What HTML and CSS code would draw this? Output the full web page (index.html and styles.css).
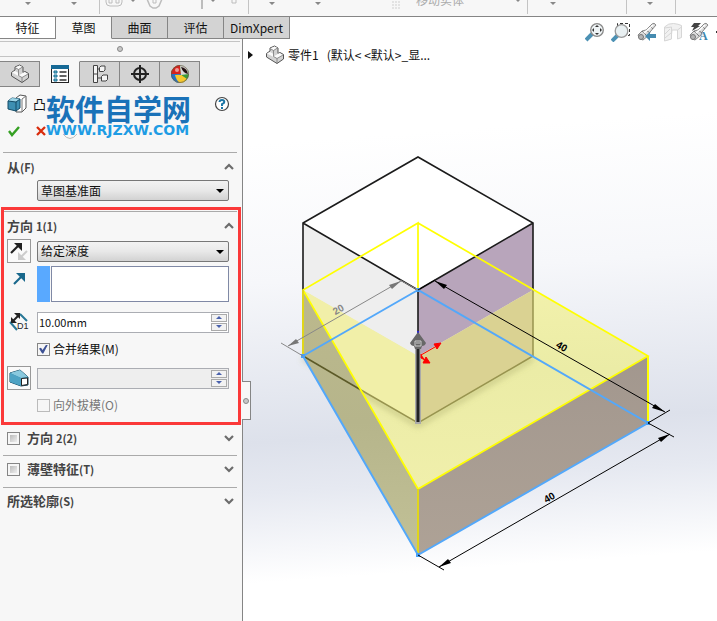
FILE: index.html
```html
<!DOCTYPE html>
<html lang="zh-CN">
<head>
<meta charset="utf-8">
<title>零件1</title>
<link rel="stylesheet" href="styles.css">
</head>
<body>
<svg class="defs" aria-hidden="true">
  <symbol id="part" viewBox="0 0 20 20">
    <path d="M1.500 8.500 5 6V3l4.500-2L13 3v5.500l2-1 3.500 2v4.500L12 18.500 1.500 12Z" fill="#d2d2d2" stroke="#555" stroke-linejoin="round"/>
    <path d="M5 3.500 9.500 1.500l3 1.500L8.500 5.500ZM2 8.500 5 7l3.500 2v3ZM8.500 11.500l6-3.500 3.500 2-6 3.500Z" fill="#fafafa"/>
    <path d="M8.500 5.500V11.500l3.500 2v5M8.500 5.500 5 3.500M8.500 5.500l4-2.500M12 13.500l6-3.500" stroke="#777" stroke-width=".8" fill="none"/>
  </symbol>
  <symbol id="up" viewBox="0 0 12 8"><path d="m2 6 4-4 4 4" fill="none" stroke="#6c6c6c" stroke-width="2.200"/></symbol>
  <symbol id="down" viewBox="0 0 12 8"><path d="m2 2 4 4 4-4" fill="none" stroke="#6c6c6c" stroke-width="2.200"/></symbol>
  <symbol id="tube" viewBox="0 0 20 20">
    <path d="m1 13 4-4 4-1 6-6q2-2 4 1l-6 7-1 3-6 5-3-1Z" fill="#dcdcdc" stroke="#888"/>
    <path d="m5 9 5 5m-1-6 4 3m0-7 3 3" fill="none" stroke="#777"/>
    <path d="m7 11 9-8" stroke="#fff" stroke-width="1.500"/>
    <circle cx="4" cy="15" r="2.500" fill="#b5b5b5" stroke="#777"/>
  </symbol>
</svg>

<div class="app">
  <header class="ribbon">
    <div class="group"><svg width="99" height="16"><path class="tri" d="M25 2h6l-3 3zM71 2h6l-3 3z"/></svg></div>
    <div class="group"><svg width="148" height="16">
      <g fill="none" stroke="#bdbdbd"><path d="M6-2v4q0 4 4 4h8q4 0 4-4v-4M9-1v4h3v-4M16-1v4h3v-4" /><path d="m47-1 3 7 3 2h3l3-2 3-7" stroke-width="1.500"/><path d="M53-1v4h3v-4"/><path d="M102 0v9" stroke-width="2"/><path d="M132-1v4h4v-4"/></g>
      <path class="tri" d="M30-1h6l-3 3zM110-1h6l-3 3z"/></svg></div>
    <div class="group"><svg width="278" height="16"><path class="tri" d="M20 2h6l-3 3zM66 2h6l-3 3zM266-1h6l-3 3z"/><path d="M143 2h8M143 5h8M143 8h8" stroke="#ddd" stroke-width="1.500" stroke-dasharray="2 1"/><text x="167" y="5" class="ribbon-label">移动实体</text></svg></div>
    <div class="group"><svg width="98" height="16"><path class="tri" d="M22 2h6l-3 3z"/></svg></div>
    <div class="group"><svg width="48" height="16"><path class="tri" d="M20 2h6l-3 3z"/></svg></div>
  </header>

  <nav class="tabs">
    <button class="tab light">特征</button><button class="tab active">草图</button><button class="tab">曲面</button><button class="tab">评估</button><button class="tab wide">DimXpert</button>
  </nav>

  <aside class="panel">
    <div class="grip"><i class="dot"></i></div>
    <nav class="manager">
      <button aria-label="设计树"><svg width="20" height="20"><use href="#part"/></svg></button>
      <button class="active" aria-label="属性"><svg width="20" height="20"><rect x="1.500" y="1.500" width="17" height="17" fill="#fff" stroke="#222"/><path d="M1 1h18v4H1z" fill="#176a96"/><path d="M4 7h3v2H4zM4 11h3v2H4zM4 15h3v2H4z" fill="#7cc" stroke="#176a96"/><path d="M9.500 8h7M9.500 12h7M9.500 16h7" stroke="#333" stroke-width="1.500"/></svg></button>
      <button aria-label="配置"><svg width="20" height="20" fill="#f4f4f4" stroke="#444"><path d="M3.500 1.500h4v17h-4zM3.500 10h4M7.500 5h3M7.500 14h4"/><path d="M9.500 3.500 11 2h4v4l-1.500 1.500h-4ZM11.500 12.500 13 11h4.500v4.500L16 17h-4.500Z"/></svg></button>
      <button aria-label="尺寸"><svg width="20" height="20" fill="none" stroke="#222" stroke-width="2"><circle cx="10" cy="10" r="6"/><path d="M10 1v18M1 10h18"/></svg></button>
      <button aria-label="外观"><svg width="20" height="20"><circle cx="10" cy="10" r="9" fill="#3c9d3a"/><path d="M1 10a9 9 0 0 1 9-9l1 10Z" fill="#d8221c"/><path d="M1 10h10v9A9 9 0 0 1 1 10Z" fill="#2373c9"/><path d="M2 12q4-2 9-1l6 4q-3 4-7 4-6-1-8-7Z" fill="#f7c92d"/><path d="M1 10l10 1v8Q2 18 1 10Z" fill="#2373c9"/><path d="M5 11h6l5 4q-3 4-6 4-4-3-5-8Z" fill="#f7c92d"/><path d="M10 1q8 0 9 9l-8 1Z" fill="#d8d8d8"/><path d="M11 3q6 1 7 7-5-1-7-7Z" fill="#211"/><circle cx="7" cy="6" r="2" fill="#fff" opacity=".55"/><circle cx="10" cy="10" r="8.500" fill="none" stroke="#654" stroke-opacity=".7"/></svg></button>
    </nav>

    <div class="feature">
      <div class="title">
        <svg width="20" height="20"><path d="m9 4 4-3 6 1v12l-4 4H9Z" fill="#fff" stroke="#555"/><path d="M15 5v13M15 5l4-3" stroke="#777" fill="none"/><path d="m1 7 4-3 8 1v9l-4 3-8-2Z" fill="#3d8fb2" stroke="#144b66"/><path d="m1 7 4-3 8 1-4 3Z" fill="#9ed5e7"/><path d="M9 8v9m0-9 4-3M1 7l8 1" stroke="#144b66" fill="none"/></svg>
        <h1>凸</h1>
        <button class="plain help" aria-label="帮助"><svg width="16" height="16"><circle cx="8" cy="8" r="6.500" fill="#fff" stroke="#444" stroke-width="1.200"/><path d="M5.500 6q.2-2 2.500-2t2.300 2Q10.300 7.200 8 8.200V10" fill="none" stroke="#1b75a5" stroke-width="2"/><path d="M7 11h2v2H7z" fill="#1b75a5"/></svg></button>
      </div>
      <div class="confirm">
        <button class="plain" aria-label="确定"><svg width="14" height="12"><path d="m2 6 3 4 7-8" fill="none" stroke="#35a023" stroke-width="2.400"/></svg></button>
        <button class="plain" aria-label="取消"><svg width="12" height="12"><path d="m2 2 8 8M10 2l-8 8" stroke="#d92b0b" stroke-width="2.300"/></svg></button>
        <button class="plain" aria-label="预览"><svg width="18" height="18"><path d="M2 12q7 9 14 0" fill="none" stroke="#bbb"/></svg></button>
      </div>
      <div class="watermark"><strong>软件自学网</strong><span>WWW.RJZXW.COM</span></div>
    </div>

    <section class="section">
      <div class="head"><h2>从<small>(F)</small></h2><button class="plain" aria-label="折叠"><svg width="12" height="8"><use href="#up"/></svg></button></div>
      <div class="fields from"><span class="drop"><select aria-label="从"><option>草图基准面</option></select></span></div>
    </section>

    <div class="highlight">
      <section class="section">
        <div class="head"><h2>方向 <small>1(1)</small></h2><button class="plain" aria-label="折叠"><svg width="12" height="8"><use href="#up"/></svg></button></div>
        <div class="fields direction">
          <button class="tool" aria-label="反向"><svg width="20" height="20"><path d="m2 12 8-8" stroke="#222" stroke-width="2.200"/><path d="M5 2h8v8Z" fill="#222"/><path d="m18 10-6 6" stroke="#ccc" stroke-width="2"/><path d="M9 11v8h8Z" fill="#ccc"/></svg></button>
          <span class="drop"><select aria-label="终止条件"><option>给定深度</option></select></span>

          <svg class="mark raised" width="20" height="20"><path d="m5 15 7-7" stroke="#19688c" stroke-width="2.200"/><path d="M7 4h9v9Z" fill="#19688c"/></svg>
          <span class="pick"><i></i><input type="text" aria-label="拉伸方向"></span>

          <svg class="mark" width="20" height="20"><path d="m1 10 7 8M11 2l7 7" stroke="#287796" stroke-width="2"/><path d="m4 9 6-6" stroke="#222" stroke-width="2"/><path d="M5 1h6v6ZM2 5v6h6Z" fill="#222"/><text x="8" y="17" class="d1">D1</text></svg>
          <span class="spin"><input type="text" value="10.00mm" aria-label="深度"><span class="steps"><button aria-label="增加"></button><button aria-label="减少"></button></span></span>

          <label class="check"><input type="checkbox" checked>合并结果(M)</label>

          <button class="tool" aria-label="拔模"><svg width="20" height="20"><path d="m1 5 10-3 8 7v8l-7 1L1 14Z" fill="#348aad" stroke="#12465f"/><path d="m1 5 10-3 8 7-7 1Z" fill="#89c9de"/><path d="m1 5 11 5v8L1 14Z" fill="#4ea3c4"/><path d="M12.500 10.500 18.500 10v6.500l-6 1Z" fill="#fff" stroke="#222"/></svg></button>
          <span class="spin off"><input type="text" disabled aria-label="拔模角度"><span class="steps"><button aria-label="增加"></button><button aria-label="减少"></button></span></span>

          <label class="check off"><input type="checkbox" disabled>向外拔模(O)</label>
        </div>
      </section>
    </div>

    <section class="section folded first">
      <div class="head"><label><input type="checkbox"><b>方向 <small>2(2)</small></b></label><button class="plain" aria-label="展开"><svg width="12" height="8"><use href="#down"/></svg></button></div>
    </section>
    <section class="section folded">
      <div class="head"><label><input type="checkbox"><b>薄壁特征<small>(T)</small></b></label><button class="plain" aria-label="展开"><svg width="12" height="8"><use href="#down"/></svg></button></div>
    </section>
    <section class="section folded">
      <div class="head"><h2>所选轮廓<small>(S)</small></h2><button class="plain" aria-label="展开"><svg width="12" height="8"><use href="#down"/></svg></button></div>
    </section>
    <div class="handle"><i class="dot"></i></div>
  </aside>

  <main class="view">
    <svg class="scene" viewBox="243 17 474 604" preserveAspectRatio="xMinYMin meet">
      <defs>
        <filter id="soft" x="-20%" y="-20%" width="140%" height="140%"><feGaussianBlur stdDeviation="3"/></filter>
        <linearGradient id="side" x2="0" y2="1"><stop stop-color="#bcb98d"/><stop offset=".5" stop-color="#b6b58b"/><stop offset="1" stop-color="#c2c197"/></linearGradient>
        <linearGradient id="front" x2="0" y2="1"><stop stop-color="#a2978e"/><stop offset="1" stop-color="#aea296"/></linearGradient>
        <linearGradient id="top" x2="0" y2="1"><stop stop-color="#f2f1ab"/><stop offset=".4" stop-color="#ebeca6"/><stop offset="1" stop-color="#f0efab"/></linearGradient>
      </defs>
      <path d="M303 290 418 356 533 290 648 356 418 489Z" fill="url(#top)"/>
      <path d="M303 358 418 425 533 358" fill="none" stroke="#8c8b50" stroke-opacity=".45" stroke-width="4" filter="url(#soft)"/>
      <path d="M303 223 418 290V356L303 290Z" fill="#eee"/>
      <path d="M533 223 418 290V356L533 290Z" fill="#b8a5bb"/>
      <path d="M303 290 418 356V423L303 356Z" fill="#f1efa8"/>
      <path d="M533 290 418 356V423L533 356Z" fill="#dad292"/>
      <path d="M303 290 418 489V555L303 356Z" fill="url(#side)"/>
      <path d="M648 356 418 489V555L648 423Z" fill="url(#front)"/>
      <path d="M418 157 533 223 418 290 303 223Z" fill="#fff"/>
      <path d="M533 290V356L418 423 361 390" fill="none" stroke="#98944f" stroke-width="1.500"/>
      <path d="m303 356 58 34" stroke="#5c5a28" stroke-width="1.500"/>
      <path d="M303 290V223L418 157 533 223V290M303 223 418 290 533 223M418 290V356" fill="none" stroke="#1b1b1b" stroke-width="1.600"/>
      <path d="M418 290V223L303 290 418 489 648 356 418 223" fill="none" stroke="#ff0" stroke-width="1.700"/>
      <path d="M303 290V356M418 489V555" stroke="#e0d61a" stroke-width="2"/>
      <path d="M648 356V423" stroke="#ff0" stroke-width="2"/>
      <path d="M418 290 303 356 418 555 648 423Z" fill="none" stroke="#53a8fa" stroke-width="2"/>
      <path d="M416 288h4v4h-4zM301 354h4v4h-4zM416 553h4v4h-4zM646 421h4v4h-4z" fill="#4aa0f5"/>
      <g stroke="#888" fill="#777"><path d="m288 346 113-65M281 343l22 13M400 280l18 10"/><path d="m288 346 8-7 3 4ZM401 281l-12 4 3 4Z" stroke="none"/></g>
      <g stroke="#000"><path d="m435 281 230 131M418 290l17-10M648 423l22-13M439 567l231-133M418 555l26 15M648 423l26 14"/><path d="m435 281 9 8 3-4ZM665 412l-10-8-3 4ZM439 567l12-4-3-4ZM670 434l-12 4 3 4Z" stroke="none"/></g>
      <g class="dimension"><text transform="translate(338 309) rotate(-30)" y="4" fill="#888">20</text><text transform="translate(562 346) rotate(30)" y="4">40</text><text transform="translate(549 497) rotate(-30)" y="4">40</text></g>
      <path d="M418 331v8" stroke="#22f" stroke-width="1.500"/>
      <path d="M418 346V424" stroke="#aaa" stroke-width="6"/><path d="M418 346V422" stroke="#222" stroke-width="3"/>
      <path d="m418 332 8 11q-1 3-4 3l-1 3h-6l-1-3q-3 0-4-3Z" fill="#676767"/><path d="M415 341h6v5h-6zM416 343h4" fill="none" stroke="#ccc"/>
      <g stroke="red" fill="red"><path d="m421 355 14-8M421 354v4l4 2"/><path d="m441 343-4 6-3-5ZM430 363l-7 0 3-6Z"/></g>
    </svg>
    <div class="view-tools">
      <button class="plain" aria-label="整屏显示"><svg width="20" height="20"><path d="m1 18 6-6" stroke="#4c91b4" stroke-width="4"/><circle cx="12" cy="8" r="6.300" fill="#eef3f5" stroke="#888" stroke-width="1.300"/><path d="m12 3 2 2h-4ZM12 13l2-2h-4ZM7 8l2-2v4ZM17 8l-2-2v4Z" fill="#333"/></svg></button>
      <button class="plain" aria-label="局部放大"><svg width="20" height="20"><path d="M6.500 4V1.500h12v12h-3" fill="none" stroke="#333" stroke-dasharray="3 2"/><path d="m1 19 6-6" stroke="#4c91b4" stroke-width="4"/><circle cx="10.500" cy="9" r="6.300" fill="#e9f0f2" stroke="#999" stroke-width="1.300"/></svg></button>
      <button class="plain" aria-label="上一视图"><svg width="20" height="20"><use href="#tube"/><path d="m8 14 5-4v2h6v4h-6v3Z" fill="#458bb0"/></svg></button>
      <button class="plain" aria-label="剖面视图"><svg width="20" height="20" fill="#f1f1f1" stroke="#d6d6d6"><path d="M1.500 5q4-4 9-3.500t8 2v12l-4 1.500V8H9l-1 9-6.500 1.500Z"/><path d="m1.500 6 7-1v12l-7 2ZM2 12l5-5M2 16l6-5M14.500 8l4-3"/></svg></button>
      <button class="plain" aria-label="动态注解"><svg width="20" height="20"><use href="#tube"/><path d="m5 1h7L9 4h2l-8 5 2-4H2Z" fill="#444"/><text x="10" y="18" class="letter">A</text></svg></button>
    </div>
    <div class="tree"><svg width="6" height="8"><path d="M0 0v8l5-4Z" fill="#111"/></svg><svg width="20" height="20"><use href="#part"/></svg><span>零件1&nbsp;&nbsp; (默认&lt; &lt;默认&gt;_显...</span></div>
  </main>
</div>
</body>
</html>
```
FILE: styles.css
```css
* { box-sizing: border-box; }
body {
  margin: 0;
  font: 12px/16px "Noto Sans CJK SC", sans-serif;
  color: #111;
}
button, input, select { font: inherit; color: inherit; margin: 0; padding: 0; }
svg { display: block; flex: none; }
.defs { position: absolute; width: 0; height: 0; }
h1, h2 { margin: 0; font-size: 13px; }
.plain { border: 0; background: none; }

.app {
  display: grid;
  grid-template: 17px 22px 1fr / 243px 1fr;
  min-height: 100vh;
  overflow: hidden;
}

.ribbon {
  grid-column: 1 / -1;
  display: flex;
  background: #f7f7f7;
  border-bottom: 1px solid #858585;
  overflow: hidden;
}
.group { height: 14px; border-right: 1px solid #c4c4c4; }
.tri { fill: #888; }
.ribbon-label { font-size: 12px; fill: #aaa; }

.tabs {
  grid-area: 2 / 1 / 3 / -1;
  justify-self: start;
  z-index: 1;
  display: flex;
}
.tab {
  width: 56px;
  background: #d3d3d3;
  border: solid #858585;
  border-width: 0 1px 1px 0;
}
.tab.light { background: #fff; }
.tab.active { background: #f7f7f7; border-bottom-color: #f7f7f7; }
.tab.wide { width: 66px; }

.panel {
  grid-area: 3 / 1;
  position: relative;
  z-index: 1;
  background: #f7f7f7;
  border-right: 1px solid #858585;
}
.grip {
  display: grid;
  place-items: center;
  height: 16px;
  margin: 2px 2px 4px 0;
  border: solid #c4c4c4;
  border-width: 1px 0;
}
.dot {
  width: 6px;
  height: 6px;
  border: 1px solid #888;
  border-radius: 50%;
  background: #c8c8c8;
}
.manager {
  display: flex;
  height: 26px;
  margin-right: 2px;
  border-bottom: 1px solid #aaa;
}
.manager button {
  display: grid;
  place-items: center;
  width: 40px;
  height: 26px;
  background: #d3d3d3;
  border: 1px solid #858585;
  border-left: 0;
}
.manager .active { background: #f7f7f7; border-color: #f7f7f7 #858585 #f7f7f7 #f7f7f7; }

.feature { position: relative; height: 65px; padding: 7px 12px 0 7px; }
.title { display: flex; align-items: center; gap: 6px; height: 20px; }
.title h1 { font-weight: 400; }
.help { margin-left: auto; }
.confirm { display: flex; align-items: center; gap: 14px; height: 34px; }
.watermark {
  position: absolute;
  left: 46px;
  top: 5px;
  color: #1a72b8;
}
.watermark strong { display: block; font-size: 29px; line-height: 32px; font-weight: 700; }
.watermark span {
  display: block;
  font: bold 14px/12px "DejaVu Sans", sans-serif;
  color: #1e9ce4;
}

.section { margin: 0 5px 0 3px; border-top: 1px solid #aaa; }
.head {
  display: flex;
  align-items: center;
  justify-content: space-between;
  height: 27px;
  padding: 0 2px 0 4px;
  font-size: 13px;
  color: #444;
}
small { font-size: 11px; }
.head label { display: flex; align-items: center; gap: 7px; }
.fields { display: grid; grid-template-columns: 24px 1fr; column-gap: 6px; padding: 0 8px 0 4px; align-items: center; }
.from { padding-bottom: 6px; }
.from .drop, .check { grid-column: 2; }

.drop { position: relative; }
.drop select {
  display: block;
  width: 100%;
  height: 21px;
  padding-left: 3px;
  appearance: none;
  border: 1px solid #777;
  border-radius: 2px;
  background: linear-gradient(#f2f2f2, #e8e8e8 50%, #d2d2d2);
}
.drop::after {
  content: "";
  position: absolute;
  right: 5px;
  top: 9px;
  border: 4px solid transparent;
  border-top-color: #000;
  border-bottom: 0;
}

.highlight { margin: 0 1px; padding-top: 1px; border: 3px solid #fb3939; }
.highlight .section { margin: 0 1px 0 0; }
.highlight .head { padding: 0 2px 0 3px; }
.direction { grid-template-rows: 24px 42px 34px 20px 38px 16px; padding: 0 8px 9px 3px; }
.tool {
  display: grid;
  place-items: center;
  width: 24px;
  height: 24px;
  border: 1px solid #999;
  background: #fafafa;
}
.mark { margin: 0 2px; }
.raised { align-self: start; margin-top: 6px; }
.pick { display: flex; gap: 1px; height: 36px; }
.pick i { width: 13px; background: #59a9ff; }
.pick input { flex: 1; min-width: 0; border: 1px solid #8089a5; background: #fff; }
.d1 { font: 9px "Liberation Sans", sans-serif; fill: #222; }

.spin { display: flex; height: 21px; padding: 1px; border: 1px solid #abadb3; background: #fff; }
.spin input { flex: 1; min-width: 0; border: 0; background: none; font-size: 11px; }
.spin.off { background: #eee; }
.steps { display: flex; flex-direction: column; gap: 1px; width: 16px; }
.steps button {
  flex: 1;
  display: grid;
  place-items: center;
  border: 1px solid #aaa;
  background: #f2f2f2;
}
.steps button::before { content: ""; border: 3px solid transparent; border-bottom-color: #4a62ad; border-top: 0; }
.steps button + button::before { border-top: 3px solid #4a62ad; border-bottom: 0; }

.check { display: flex; align-items: center; gap: 3px; }
.check.off { color: #777; }
input[type=checkbox] {
  appearance: none;
  display: grid;
  place-items: center;
  width: 13px;
  height: 13px;
  border: 1px solid #858585;
  background: #f6f6f6;
}
.check.off input { border-color: #bbb; }
.check input:checked::before {
  content: "";
  width: 9px;
  height: 9px;
  background: #3e5295;
  clip-path: polygon(0 45%, 22% 35%, 40% 62%, 80% 0, 100% 0, 48% 100%, 35% 100%);
}
.head input::before { content: ""; width: 7px; height: 7px; background: linear-gradient(135deg, #bbb, #eee); }

.folded .head { height: 26px; margin-bottom: 5px; }
.folded.first { border: 0; }
.folded.first .head { margin-bottom: 4px; }

.handle {
  position: absolute;
  left: 242px;
  top: 342px;
  display: grid;
  place-items: center;
  width: 9px;
  height: 39px;
  border: 1px solid #858585;
  border-left: 0;
  background: #f7f7f7;
}

.view {
  grid-area: 2 / 2 / 4 / 3;
  position: relative;
  padding-top: 5px;
  background: linear-gradient(176deg, #fff 20%, #f6f7fa 42%, #dde1eb 67%, #e6e9f1 75%, #fff 89%);
}
.scene { position: absolute; inset: 0; width: 100%; height: 100%; }
.dimension { font: bold 10px "Liberation Sans", sans-serif; text-anchor: middle; }
.view-tools { position: relative; display: flex; justify-content: flex-end; gap: 6px; padding-right: 8px; }
.view-tools::after { content: ""; position: absolute; right: 0; top: 9px; width: 1px; height: 2px; background: #333; }
.letter { font: bold 12px "Liberation Serif", serif; fill: #3f87ad; }
.tree { position: relative; display: flex; align-items: center; height: 26px; padding-left: 5px; }
.tree svg + svg { margin-left: 11px; }
.tree span { margin-left: 3px; }
```
